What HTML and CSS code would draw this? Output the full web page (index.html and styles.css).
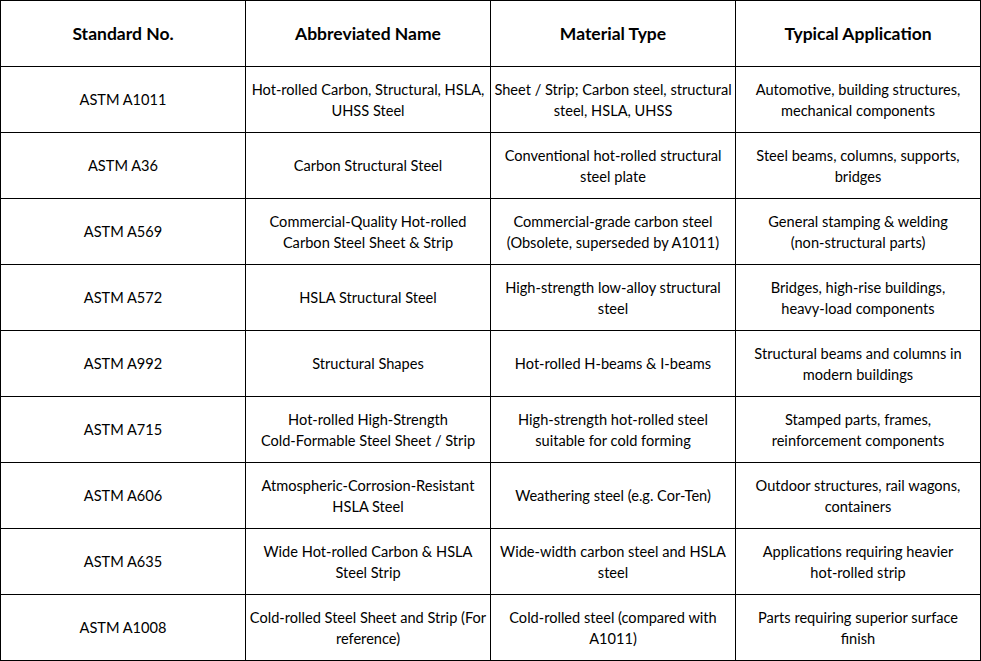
FILE: index.html
```html
<!DOCTYPE html>
<html>
<head>
<meta charset="utf-8">
<link rel="stylesheet" href="styles.css">
</head>
<body>
<table class="spec">
<thead>
<tr><th>Standard No.</th><th>Abbreviated Name</th><th>Material Type</th><th>Typical Application</th></tr>
</thead>
<tbody>
<tr><td>ASTM A1011</td><td>Hot-rolled Carbon, Structural, HSLA,<br>UHSS Steel</td><td>Sheet / Strip; Carbon steel, structural<br>steel, HSLA, UHSS</td><td>Automotive, building structures,<br>mechanical components</td></tr>
<tr><td>ASTM A36</td><td>Carbon Structural Steel</td><td>Conventional hot-rolled structural<br>steel plate</td><td>Steel beams, columns, supports,<br>bridges</td></tr>
<tr><td>ASTM A569</td><td>Commercial-Quality Hot-rolled<br>Carbon Steel Sheet &amp; Strip</td><td>Commercial-grade carbon steel<br>(Obsolete, superseded by A1011)</td><td>General stamping &amp; welding<br>(non-structural parts)</td></tr>
<tr><td>ASTM A572</td><td>HSLA Structural Steel</td><td>High-strength low-alloy structural<br>steel</td><td>Bridges, high-rise buildings,<br>heavy-load components</td></tr>
<tr><td>ASTM A992</td><td>Structural Shapes</td><td>Hot-rolled H-beams &amp; I-beams</td><td>Structural beams and columns in<br>modern buildings</td></tr>
<tr><td>ASTM A715</td><td>Hot-rolled High-Strength<br>Cold-Formable Steel Sheet / Strip</td><td>High-strength hot-rolled steel<br>suitable for cold forming</td><td>Stamped parts, frames,<br>reinforcement components</td></tr>
<tr><td>ASTM A606</td><td>Atmospheric-Corrosion-Resistant<br>HSLA Steel</td><td>Weathering steel (e.g. Cor-Ten)</td><td>Outdoor structures, rail wagons,<br>containers</td></tr>
<tr><td>ASTM A635</td><td>Wide Hot-rolled Carbon &amp; HSLA<br>Steel Strip</td><td>Wide-width carbon steel and HSLA<br>steel</td><td>Applications requiring heavier<br>hot-rolled strip</td></tr>
<tr><td>ASTM A1008</td><td>Cold-rolled Steel Sheet and Strip (For<br>reference)</td><td>Cold-rolled steel (compared with<br>A1011)</td><td>Parts requiring superior surface<br>finish</td></tr>
</tbody>
</table>
</body>
</html>
```
FILE: styles.css
```css
html, body {
  margin: 0;
  padding: 0;
  background: #ffffff;
}
.spec {
  border-collapse: collapse;
  table-layout: fixed;
  width: 981px;
  font-family: "Lato", "Open Sans", sans-serif;
  color: #000;
}
.spec th, .spec td {
  border: 1px solid #000;
  height: 65px;
  padding: 0 1px;
  text-align: center;
  vertical-align: middle;
  box-sizing: border-box;
  white-space: nowrap;
}
.spec tr { height: 66px; }
.spec th {
  font-size: 17.5px;
  font-weight: bold;
}
.spec td {
  font-size: 14.6px;
  line-height: 21px;
}
```
